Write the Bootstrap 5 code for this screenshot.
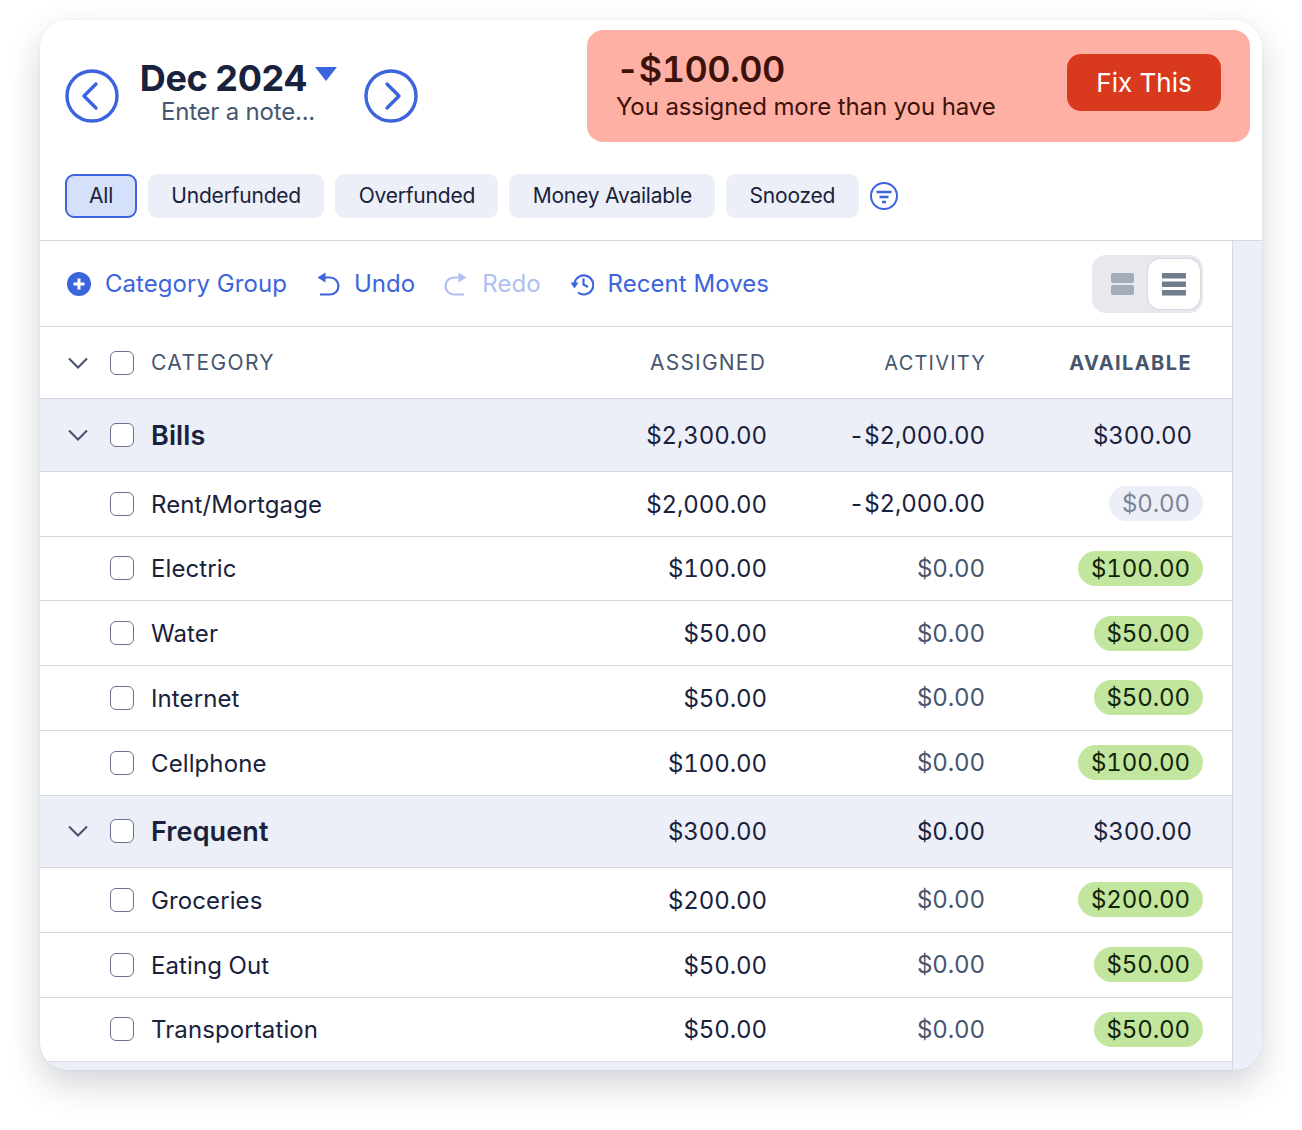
<!DOCTYPE html>
<html lang="en">
<head>
    <meta charset="UTF-8">
    <title>Budget</title>
    <link href="https://cdn.jsdelivr.net/npm/bootstrap@5.3.0/dist/css/bootstrap.min.css" rel="stylesheet">
    <style>
        html, body { height: 1130px; overflow: hidden; background: #fff; }
        body { font-family: "Inter", "Liberation Sans", sans-serif; color: #19223c; padding: 20px 40px 0; }
        .shell { height: 1050px; background: #fff; border-radius: 28px; overflow: hidden; box-shadow: 0 14px 34px rgba(30, 40, 60, .2), 0 0 3px rgba(30, 40, 60, .06); }
        .top-bar { height: 134px; padding: 10px 12px 0 25px; }
        .month-box { width: 245px; padding-top: 26px; }
        .month-nav { width: 54px; height: 54px; margin-top: 39px; padding: 0; border: 0; background: none; }
        .month-name { font-size: 36px; font-weight: 700; line-height: 44px; letter-spacing: -.4px; margin-right: 6px; }
        .month-note { font-size: 24px; line-height: 24px; color: #46566f; letter-spacing: -.2px; margin-right: 7px; }
        .alert-box { width: 663px; height: 112px; background: #ffb0a4; border-radius: 16px; padding: 0 29px; color: #3d120a; }
        .alert-amount { font-size: 36px; font-weight: 600; line-height: 46px; letter-spacing: -.5px; font-variant-numeric: tabular-nums; }
        .alert-text { font-size: 24px; line-height: 30px; letter-spacing: -.1px; }
        .fix-btn { width: 154px; height: 57px; font-size: 26px; color: #fff; background: #d93a1e; border: 0; border-radius: 14px; }
        .filter-bar { height: 88px; padding: 20px 25px 0; gap: 11px; border-bottom: 1px solid #d3d8e2; }
        .pill-btn { height: 44px; padding: 1px 21.3px 0; font-size: 21px; letter-spacing: -.2px; background: #eceff7; color: #19223c; border: 2px solid #eceff7; border-radius: 9px; }
        .pill-btn.on { min-width: 72px; background: #d5e0fa; border-color: #3c64dc; }
        .table-side { width: 30px; background: #eceff8; border-left: 1px solid #d3d8e2; }
        .tool-row { height: 86px; padding: 1px 29px 0 27px; gap: 29px; border-bottom: 1px solid #d3d8e2; }
        .tool-link { color: #3c64dc; font-size: 24px; letter-spacing: .05px; gap: 14px; text-decoration: none; }
        .tool-link.off { color: #aebff0; }
        .view-switch { margin-left: auto; width: 111px; height: 58px; background: #e7e9ee; border-radius: 14px; padding: 4px 3px; }
        .view-on { width: 52px; height: 50px; background: #fff; border-radius: 12px; margin-left: auto; box-shadow: 0 0 2px rgba(0,0,0,.25); }
        .bud-row { display: flex; align-items: center; border-bottom: 1px solid #d3d8e2; height: 64.75px; font-size: 24px; letter-spacing: -.1px; font-variant-numeric: tabular-nums; }
        .bud-row.head { height: 71.8px; font-size: 21px; letter-spacing: 1.2px; color: #46566f; }
        .bud-row.group { height: 72.5px; background: #eceff8; }
        .bud-row.group .c-name { font-size: 27px; font-weight: 600; letter-spacing: .1px; }
        .c-arrow { width: 70px; padding-left: 28px; flex: none; }
        .c-check { width: 24px; height: 24px; border: 1.5px solid #6c6f8e; border-radius: 6px; background: #fff; flex: none; margin-right: 17px; }
        .c-name { flex: 1; padding-top: 2px; letter-spacing: .1px; }
        .c-assigned { width: 251px; text-align: right; flex: none; padding-top: 2px; }
        .c-activity { width: 218px; text-align: right; flex: none; padding-top: 1px; }
        .c-avail { width: 247px; text-align: right; flex: none; padding-right: 29px; padding-top: 1px; }
        .group .c-avail { padding-right: 40px; padding-top: 2px; }
        .head .c-name { letter-spacing: 1.4px; padding-top: 0; }
        .head .c-assigned { width: 250px; padding-top: 0; }
        .head .c-activity { width: 220px; font-size: 20px; letter-spacing: 1.2px; padding-top: 0; }
        .head .c-avail { width: 246px; font-size: 20px; letter-spacing: 1.4px; padding-right: 40px; padding-top: 0; }
        .txt-muted { color: #46566f; }
        .money-pill { display: inline-block; height: 35px; line-height: 35px; padding: 0 13px; border-radius: 18px; background: #c3e69f; color: #10240a; }
        .money-pill.zero { background: #eceff7; color: #7d8594; }
        .table-end { height: 10px; background: #eceff8; }
    </style>
</head>
<body>
    <div class="shell d-flex flex-column">
        <div class="top-bar d-flex">
            <button class="month-nav" aria-label="Previous month">
                <svg width="54" height="54" viewBox="0 0 54 54" fill="none" stroke="#3c64dc" stroke-width="3.4"><circle cx="27" cy="27" r="25"/><path d="M31 15 L19 27 L31 39" stroke-linecap="round" stroke-linejoin="round"/></svg>
            </button>
            <div class="month-box text-center">
                <div class="month-name d-flex justify-content-center align-items-center gap-2">Dec 2024
                    <svg width="22" height="16" viewBox="0 0 22 16" class="mb-2"><path d="M0 1 H22 L11 15 Z" fill="#3c64dc"/></svg>
                </div>
                <div class="month-note">Enter a note...</div>
            </div>
            <button class="month-nav" aria-label="Next month">
                <svg width="54" height="54" viewBox="0 0 54 54" fill="none" stroke="#3c64dc" stroke-width="3.4"><circle cx="27" cy="27" r="25"/><path d="M23 15 L35 27 L23 39" stroke-linecap="round" stroke-linejoin="round"/></svg>
            </button>
            <div class="alert-box ms-auto d-flex align-items-center justify-content-between">
                <div class="mb-1">
                    <div class="alert-amount">-$100.00</div>
                    <div class="alert-text">You assigned more than you have</div>
                </div>
                <button class="fix-btn mb-2">Fix This</button>
            </div>
        </div>
        <div class="filter-bar d-flex align-items-start">
            <button class="pill-btn on">All</button>
            <button class="pill-btn">Underfunded</button>
            <button class="pill-btn">Overfunded</button>
            <button class="pill-btn">Money Available</button>
            <button class="pill-btn">Snoozed</button>
            <svg class="mt-2" width="28" height="28" viewBox="0 0 28 28" fill="none" stroke="#3c64dc" stroke-width="2"><circle cx="14" cy="14" r="13"/><path d="M6.5 10 H21.5 M9.5 15 H18.5 M12 20 H16" stroke-width="2.4"/></svg>
        </div>
        <div class="d-flex flex-grow-1 overflow-hidden">
            <div class="flex-grow-1">
                <div class="tool-row d-flex align-items-center">
                    <a class="tool-link d-flex align-items-center">
                        <svg width="24" height="24" viewBox="0 0 24 24"><circle cx="12" cy="12" r="12" fill="#3c64dc"/><path d="M12 6.5 V17.5 M6.5 12 H17.5" stroke="#fff" stroke-width="3"/></svg>
                        Category Group
                    </a>
                    <a class="tool-link d-flex align-items-center">
                        <svg width="24" height="24" viewBox="0 0 24 24" fill="none" stroke="#3c64dc" stroke-width="2.2"><path d="M9 5.5 H14 A8.5 8.5 0 0 1 14 22.5 H4"/><path d="M9.5 0.5 V10.5 L1.5 5.5 Z" fill="#3c64dc" stroke="none"/></svg>
                        Undo
                    </a>
                    <a class="tool-link off d-flex align-items-center">
                        <svg width="24" height="24" viewBox="0 0 24 24" fill="none" stroke="#aebff0" stroke-width="2.2"><path d="M15 5.5 H10 A8.5 8.5 0 0 0 10 22.5 H20"/><path d="M14.5 0.5 V10.5 L22.5 5.5 Z" fill="#aebff0" stroke="none"/></svg>
                        Redo
                    </a>
                    <a class="tool-link d-flex align-items-center">
                        <svg width="24" height="24" viewBox="0 0 24 24" fill="none" stroke="#3c64dc" stroke-width="2.2"><path d="M4.5 11 A9.5 9.5 0 1 1 8 20.5 M13.5 6.5 V12.5 L18 15"/><path d="M0.5 10.5 H8.5 L4.5 16.5 Z" fill="#3c64dc" stroke="none"/></svg>
                        Recent Moves
                    </a>
                    <div class="view-switch d-flex">
                        <svg class="align-self-center ms-3" width="24" height="24" viewBox="0 0 24 24" fill="#a5acb9"><rect y="1" width="23" height="10" rx="2"/><rect y="13" width="23" height="10" rx="2"/></svg>
                        <div class="view-on d-flex align-items-center justify-content-center">
                            <svg width="24" height="24" viewBox="0 0 24 24" fill="#747c8f"><rect y="1" width="24" height="5.5"/><rect y="9.5" width="24" height="5.5"/><rect y="18" width="24" height="5.5"/></svg>
                        </div>
                    </div>
                </div>
                <div id="rows"></div>
                <div class="table-end"></div>
            </div>
            <div class="table-side"></div>
        </div>
    </div>
    <script>
        // [type, name, assigned, activity, available]
        const data = [
            ['group', 'Bills', '$2,300.00', '-$2,000.00', '$300.00'],
            ['item', 'Rent/Mortgage', '$2,000.00', '-$2,000.00', '$0.00'],
            ['item', 'Electric', '$100.00', '$0.00', '$100.00'],
            ['item', 'Water', '$50.00', '$0.00', '$50.00'],
            ['item', 'Internet', '$50.00', '$0.00', '$50.00'],
            ['item', 'Cellphone', '$100.00', '$0.00', '$100.00'],
            ['group', 'Frequent', '$300.00', '$0.00', '$300.00'],
            ['item', 'Groceries', '$200.00', '$0.00', '$200.00'],
            ['item', 'Eating Out', '$50.00', '$0.00', '$50.00'],
            ['item', 'Transportation', '$50.00', '$0.00', '$50.00']
        ];
        const chevron = '<svg class="d-block" width="20" height="12" viewBox="0 0 20 12" fill="none" stroke="#46506a" stroke-width="2"><path d="M1 1.5 L10 10.5 L19 1.5"/></svg>';
        let html = '<div class="bud-row head"><div class="c-arrow">' + chevron + '</div><div class="c-check"></div><div class="c-name">CATEGORY</div><div class="c-assigned">ASSIGNED</div><div class="c-activity">ACTIVITY</div><div class="c-avail fw-bold">AVAILABLE</div></div>';
        data.forEach(r => {
            const isGroup = r[0] === 'group';
            let avail = r[4];
            if (!isGroup) avail = '<span class="money-pill' + (r[4] === '$0.00' ? ' zero' : '') + '">' + r[4] + '</span>';
            const actClass = !isGroup && r[3] === '$0.00' ? ' txt-muted' : '';
            html += '<div class="bud-row' + (isGroup ? ' group' : '') + '"><div class="c-arrow">' + (isGroup ? chevron : '') + '</div><div class="c-check"></div><div class="c-name">' + r[1] + '</div><div class="c-assigned">' + r[2] + '</div><div class="c-activity' + actClass + '">' + r[3] + '</div><div class="c-avail">' + avail + '</div></div>';
        });
        document.getElementById('rows').innerHTML = html;
    </script>
    <script src="https://cdn.jsdelivr.net/npm/bootstrap@5.3.0/dist/js/bootstrap.bundle.min.js"></script>
</body>
</html>
